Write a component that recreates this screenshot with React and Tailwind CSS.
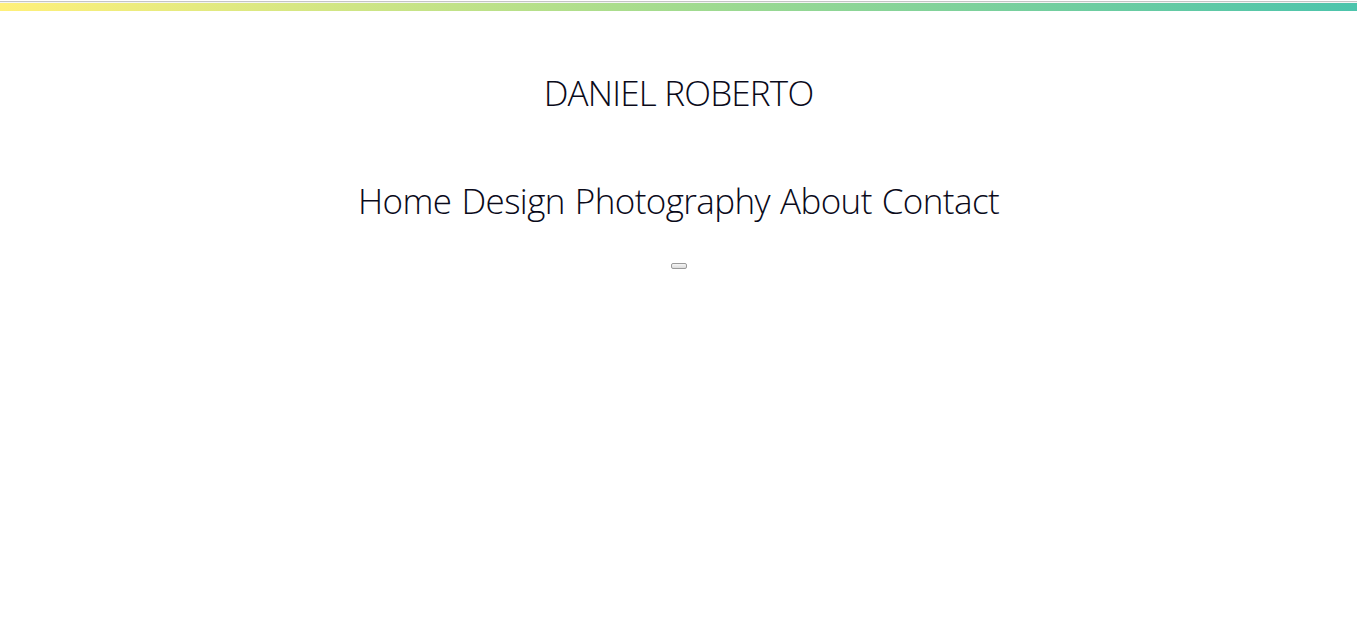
export default function App() {
  const links = ['Home', 'Design', 'Photography', 'About', 'Contact'];

  return (
    <div className="min-h-screen bg-white font-['Open_Sans',sans-serif] font-light text-[#0a0a1a]">
      {/* top strip */}
      <div className="h-[1px] bg-white" />
      <div className="h-[1px] bg-[#c4c4c4]" />
      <div className="h-[1px] bg-[#f4f4f4]" />
      <div className="h-[8px] bg-[linear-gradient(90deg,#fff07a_0%,#a6dc8e_48%,#4cc4ac_100%)]" />

      <header className="flex flex-col items-center">
        <h1 className="mt-[60px] text-[35px] leading-[44px] tracking-[-0.8px]">DANIEL ROBERTO</h1>
        <nav className="mt-[64px] flex gap-[10px] text-[35px] leading-[44px] tracking-[-0.6px]">
          {links.map(l => (
            <a key={l} href="#">{l}</a>
          ))}
        </nav>
        <button className="mt-[40px] h-[6px] w-[16px] rounded-[2px] border border-[#9a9a9a] bg-[linear-gradient(#f6f6f6,#dcdcdc)]" />
      </header>
    </div>
  );
}
